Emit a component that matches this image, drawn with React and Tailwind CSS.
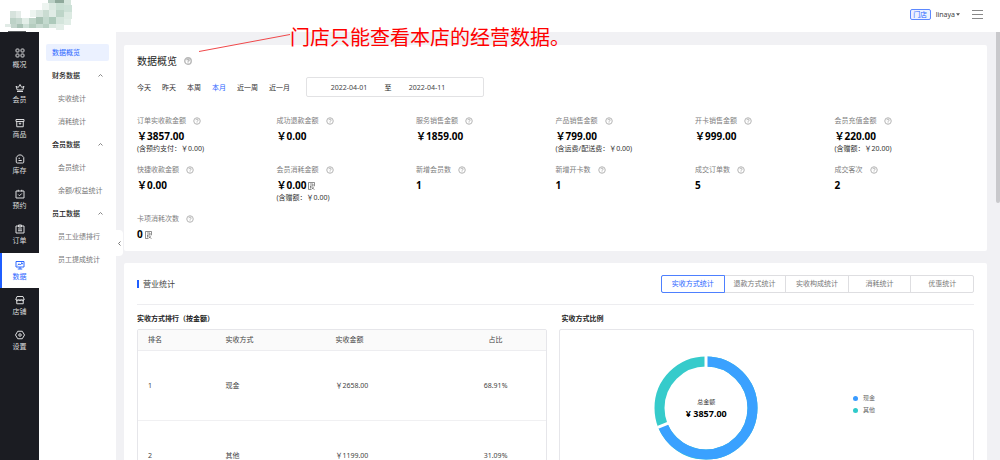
import React from "react";

const navItems = [
  { label: "概况", icon: "grid" },
  { label: "会员", icon: "crown" },
  { label: "商品", icon: "box" },
  { label: "库存", icon: "stock" },
  { label: "预约", icon: "booking" },
  { label: "订单", icon: "order" },
  { label: "数据", icon: "data", active: true },
  { label: "店铺", icon: "shop" },
  { label: "设置", icon: "settings" },
];

const iconShapes = {
  grid: (
    <>
      <rect x="2" y="2" width="6" height="6" rx="1.5" />
      <rect x="12" y="2" width="6" height="6" rx="1.5" />
      <rect x="2" y="12" width="6" height="6" rx="1.5" />
      <rect x="12" y="12" width="6" height="6" rx="1.5" />
    </>
  ),
  crown: (
    <path d="M4 17h12M4.500 14 2 6.500l4.500 2.500L10 3l3.500 6L18 6.500 15.500 14z" />
  ),
  box: (
    <path d="M2 3h16v4H2zM3.500 7v10.500h13V7M7.500 10.500h5M10 10.500v3" />
  ),
  stock: (
    <path d="M2.500 7 7 2h6l4.500 5v9a2 2 0 0 1-2 2h-11a2 2 0 0 1-2-2zM7 8.500h3M7 13h6.500" />
  ),
  booking: (
    <path d="M2 4h16v14H2zM6.500 1.500V5M13.500 1.500V5M6.500 11l2.500 2.500 4.500-4.500" />
  ),
  order: <path d="M2 4h16v14H2zM7 2h6v4H7zM6 10h8M6 13.500h8" />,
  data: (
    <path d="M2 3h16v11H2zM10 14v4M5.500 18h9M5.500 10.500 8 7.500l2.500 2.500L14.500 6M12 6h2.500v2.500" />
  ),
  shop: (
    <path d="M4 3h12l2 5v2H2V8zM3.500 10v7.500h13V10M2 9.500c1.500 2.500 4 2.500 5.300 0 1.300 2.500 4.100 2.500 5.400 0 1.300 2.500 3.800 2.500 5.300 0" />
  ),
  settings: (
    <>
      <path d="M5.500 2.500h9L19 10l-4.500 7.500h-9L1 10z" />
      <circle cx="10" cy="10" r="2.500" />
    </>
  ),
};

const menuGroups = [
  { title: "财务数据", items: ["实收统计", "消耗统计"] },
  { title: "会员数据", items: ["会员统计", "余额/权益统计"] },
  { title: "员工数据", items: ["员工业绩排行", "员工提成统计"] },
];

const ranges = ["今天", "昨天", "本周", "本月", "近一周", "近一月"];

const stats = [
  { label: "订单实收款金额", value: "￥3857.00", note: "(含预约支付：￥0.00)" },
  { label: "成功退款金额", value: "￥0.00" },
  { label: "服务销售金额", value: "￥1859.00" },
  { label: "产品销售金额", value: "￥799.00", note: "(含运费/配送费：￥0.00)" },
  { label: "开卡销售金额", value: "￥999.00" },
  { label: "会员充值金额", value: "￥220.00", note: "(含赠额：￥20.00)" },
  { label: "快捷收款金额", value: "￥0.00" },
  { label: "会员消耗金额", value: "￥0.00", note: "(含赠额：￥0.00)", detail: true },
  { label: "新增会员数", value: "1" },
  { label: "新增开卡数", value: "1" },
  { label: "成交订单数", value: "5" },
  { label: "成交客次", value: "2" },
  { label: "卡项消耗次数", value: "0", detail: true },
];

const statTabs = ["实收方式统计", "退款方式统计", "实收构成统计", "消耗统计", "优惠统计"];

const payments = [
  { rank: 1, name: "现金", amount: "￥2658.00", share: "68.91%" },
  { rank: 2, name: "其他", amount: "￥1199.00", share: "31.09%" },
];

const logoBlocks = [
  [48, 0, 7, 3, "#b9cfc4"], [55, 0, 9, 3, "#8fa99b"], [64, 0, 7, 5, "#d5e5dc"],
  [42, 3, 7, 7, "#edf4f0"], [49, 3, 7, 7, "#dbe9e1"], [56, 3, 8, 7, "#c9dfd3"], [64, 5, 8, 7, "#cde1d7"],
  [10, 11, 6, 7, "#d6e2dc"], [16, 11, 5, 7, "#e4ece8"], [30, 10, 6, 7, "#edf4f0"], [36, 10, 7, 7, "#dce8e2"],
  [43, 10, 6, 7, "#cadcd2"], [49, 10, 7, 7, "#e0ece6"], [56, 10, 8, 7, "#bdd5c8"], [64, 12, 8, 7, "#dceae2"],
  [10, 18, 6, 6, "#bdd2c7"], [16, 18, 6, 6, "#c6d8cf"], [22, 18, 7, 6, "#e3eee8"], [29, 18, 7, 6, "#bfd5c9"],
  [36, 17, 7, 7, "#a9c3b5"], [43, 17, 6, 7, "#c3d9ce"], [49, 17, 7, 7, "#adcabb"], [56, 17, 8, 7, "#d4e5dc"], [64, 19, 7, 6, "#e0ede6"],
  [5, 24, 6, 3, "#e1ebe6"], [11, 24, 6, 4, "#c2d4cb"], [17, 24, 6, 4, "#a9c2b5"], [23, 24, 6, 4, "#cddfd6"],
  [29, 24, 7, 4, "#b5cdc0"], [36, 24, 7, 4, "#c9dbd2"], [43, 24, 6, 4, "#b9d0c4"], [49, 24, 7, 4, "#dbe9e1"], [56, 24, 8, 6, "#e3eee8"],
  [8, 31, 18, 1, "#5b5e60"],
];

function Help({ large }) {
  return (
    <svg
      viewBox="0 0 16 16"
      aria-hidden="true"
      className={large ? "size-[8px] text-[#b8b8b8]" : "size-[8px] text-[#b4b4b4]"}
      fill="none"
      stroke="currentColor"
      strokeWidth={large ? 2.8 : 2}
    >
      <circle cx="8" cy="8" r="6.500" />
      <path d="M5.700 6.300c0-3 4.600-3 4.600 0 0 1.500-2.300 1.600-2.300 3.200M8 11v1.500" />
    </svg>
  );
}

function DetailIcon() {
  return (
    <svg viewBox="0 0 14 16" aria-hidden="true" className="h-[8px] w-[7px] text-[#555555]" fill="none" stroke="currentColor" strokeWidth="1.300">
      <path d="M1 15V1h12v7M1 15h5M4 4h6v4H4M5 8v5M7 11l6 4M12 9l-5 6" />
    </svg>
  );
}

function NavRail() {
  return (
    <nav className="w-[39px] shrink-0 bg-[#1b1c22] pt-[9px]">
      <div className="grid h-[318px] auto-rows-fr">
        {navItems.map((item) => (
          <a
            key={item.label}
            href="#"
            className={
              item.active
                ? "flex flex-col items-center justify-center gap-px border-l-2 border-[#1f5eff] bg-white pr-[2px] text-[#2a66ff]"
                : "flex flex-col items-center justify-center gap-px text-[#dcdcde]"
            }
          >
            <svg viewBox="0 0 20 20" aria-hidden="true" className="size-[10px]" fill="none" stroke="currentColor" strokeWidth="2" strokeLinejoin="round">
              {iconShapes[item.icon]}
            </svg>
            <span className="leading-[11px]">{item.label}</span>
          </a>
        ))}
      </div>
    </nav>
  );
}

function SideMenu() {
  return (
    <aside className="w-[77px] shrink-0 bg-white pt-[9px]">
      <div className="flex h-[23px] items-center px-[7px]">
        <a href="#" className="flex h-[17px] grow items-center rounded-xs bg-[#ebf1ff] pl-[6px] text-[#2a66ff]">
          数据概览
        </a>
      </div>
      {menuGroups.map((group) => (
        <section key={group.title}>
          <button type="button" className="flex h-[23px] w-full items-center justify-between px-[13px] font-medium text-[#222222]">
            {group.title}
            <svg viewBox="0 0 10 6" aria-hidden="true" className="h-[3px] w-[5px]" fill="none" stroke="#777777" strokeWidth="1.800">
              <path d="M1 5l4-4 4 4" />
            </svg>
          </button>
          {group.items.map((item) => (
            <a key={item} href="#" className="flex h-[23px] items-center pl-[19px] whitespace-nowrap text-[#777777]">
              {item}
            </a>
          ))}
        </section>
      ))}
    </aside>
  );
}

function Overview() {
  return (
    <section className="rounded-xs bg-white px-[13px] pt-[8px] pb-[10px]">
      <div className="flex items-center gap-[7px]">
        <h1 className="text-[10px] leading-[16px] text-[#222222]">数据概览</h1>
        <Help large />
      </div>
      <div className="mt-[8px] flex items-center">
        <div className="flex gap-[11px]">
          {ranges.map((range) => (
            <button key={range} type="button" className={range === "本月" ? "text-[#2a66ff]" : "text-[#333333]"}>
              {range}
            </button>
          ))}
        </div>
        <div className="ml-[16px] flex h-[20px] w-[178px] items-center rounded-xs border border-[#e2e2e4] pl-[13px]">
          <input aria-label="开始日期" defaultValue="2022-04-01" className="w-[58px] text-center text-[#444444] outline-none" />
          <span className="w-[20px] text-center font-medium text-[#333333]">至</span>
          <input aria-label="结束日期" defaultValue="2022-04-11" className="w-[58px] text-center text-[#444444] outline-none" />
        </div>
      </div>
      <dl className="mt-[18px] grid grid-cols-6 gap-y-[9px]">
        {stats.map((stat) => (
          <div key={stat.label} className="whitespace-nowrap">
            <dt className="flex items-center gap-[7px] text-[#808080]">
              {stat.label}
              <Help />
            </dt>
            <dd className="mt-[4px] flex items-center gap-[2px] text-[10px] leading-[13px] font-bold text-black">
              {stat.value}
              {stat.detail && <DetailIcon />}
            </dd>
            {stat.note && <dd className="leading-[12px] text-[#333333]">{stat.note}</dd>}
          </div>
        ))}
      </dl>
    </section>
  );
}

function Donut() {
  const length = 2 * Math.PI * 46.5;
  return (
    <div className="grid size-[104px] place-items-center">
      <svg viewBox="0 0 104 104" aria-hidden="true" className="col-start-1 row-start-1 size-full" fill="none">
        <circle cx="52" cy="52" r="46.500" stroke="#36cbcb" strokeWidth="10" />
        <circle
          cx="52"
          cy="52"
          r="46.500"
          stroke="#3aa1ff"
          strokeWidth="10"
          strokeDasharray={`${length * 0.6891} ${length}`}
          transform="rotate(-90 52 52)"
        />
        <path d="M52 14V0" stroke="#ffffff" strokeWidth="3" />
        <path d="M52 14V0" stroke="#ffffff" strokeWidth="3" transform="rotate(248.080 52 52)" />
      </svg>
      <p className="col-start-1 row-start-1 text-center text-[6px] leading-[12px] text-[#333333]">
        总金额
        <strong className="block text-[9px] leading-[12px] text-black">¥ 3857.00</strong>
      </p>
    </div>
  );
}

function Business() {
  return (
    <section className="mt-3 rounded-xs bg-white px-[13px] pb-3">
      <header className="flex h-[42px] items-center justify-between border-b border-[#ededf0]">
        <h2 className="flex items-center gap-[4px] text-[8px] text-[#444444]">
          <span className="h-[8px] w-[2px] bg-[#1f5eff]" />
          营业统计
        </h2>
        <div className="flex h-[18px] w-[313px] rounded-xs border border-[#dedee1]">
          {statTabs.map((tab, i) => (
            <button
              key={tab}
              type="button"
              className={
                i === 0
                  ? "-m-px flex-1 rounded-l-xs border border-[#4e80ff] text-[#2a66ff]"
                  : i === 1
                    ? "flex-1 text-[#777777]"
                    : "flex-1 border-l border-[#dedee1] text-[#777777]"
              }
            >
              {tab}
            </button>
          ))}
        </div>
      </header>
      <div className="grid grid-cols-[410fr_416fr] gap-3 pt-[8px]">
        <div>
          <h3 className="mb-[5px] font-bold text-[#222222]">实收方式排行（按金额）</h3>
          <div className="overflow-hidden rounded-xs border border-[#e6e6ea]">
            <table className="w-full table-fixed text-left text-[#444444]">
              <thead className="bg-[#fafafa]">
                <tr className="h-[20px] border-b border-[#ededf0]">
                  <th className="w-[19%] pl-[10px] font-normal">排名</th>
                  <th className="w-[27%] pl-[10px] font-normal">实收方式</th>
                  <th className="w-[30%] pl-[10px] font-normal">实收金额</th>
                  <th className="pr-[2px] text-center font-normal">占比</th>
                </tr>
              </thead>
              <tbody>
                {payments.map((row) => (
                  <tr key={row.rank} className="h-[70px] border-b border-[#f0f0f2]">
                    <td className="pl-[10px]">{row.rank}</td>
                    <td className="pl-[10px]">{row.name}</td>
                    <td className="pl-[10px]">{row.amount}</td>
                    <td className="pr-[2px] text-center">{row.share}</td>
                  </tr>
                ))}
              </tbody>
            </table>
          </div>
        </div>
        <div className="flex flex-col">
          <h3 className="mb-[5px] pl-[3px] font-bold text-[#222222]">实收方式比例</h3>
          <div className="flex grow rounded-xs border border-[#e6e6ea]">
            <div className="flex w-[71%] justify-center pt-[26px]">
              <Donut />
            </div>
            <ul className="pt-[62px] text-[6px] text-[#666666]">
              <li className="flex items-center gap-[5px] leading-[12px]">
                <span className="size-[5px] rounded-full bg-[#3a9bff]" />
                现金
              </li>
              <li className="flex items-center gap-[5px] leading-[12px]">
                <span className="size-[5px] rounded-full bg-[#2fcaca]" />
                其他
              </li>
            </ul>
          </div>
        </div>
      </div>
    </section>
  );
}

export default function App() {
  return (
    <div
      lang="zh-CN"
      className="relative flex h-screen flex-col overflow-hidden bg-[#f1f1f4] font-['Noto_Sans','Noto_Sans_CJK_SC',sans-serif] text-[7px] leading-[11px]"
    >
      <header className="flex h-[32px] shrink-0 items-center justify-between bg-white pr-[17px]">
        <svg viewBox="0 0 76 32" aria-hidden="true" className="h-[32px] w-[76px]">
          {logoBlocks.map(([x, y, w, h, fill]) => (
            <rect key={`${x}-${y}`} x={x} y={y} width={w} height={h} fill={fill} />
          ))}
        </svg>
        <div className="flex items-center pb-[4px]">
          <span className="flex h-[11px] w-[21px] items-center justify-center rounded-xs border border-[#5c88ff] bg-[#edf2ff] text-[#2a66ff]">
            门店
          </span>
          <button type="button" className="ml-[5px] flex items-center gap-[1px] text-[#444444]">
            linaya
            <svg viewBox="0 0 8 5" aria-hidden="true" className="h-[3px] w-[4px]">
              <path d="M0 0h8L4 5z" fill="#555555" />
            </svg>
          </button>
          <button type="button" aria-label="菜单" className="ml-[12px]">
            <svg viewBox="0 0 11 9" aria-hidden="true" className="h-[9px] w-[11px]" stroke="#888888" strokeWidth="1">
              <path d="M0 .5h11M0 4.500h11M0 8.500h11" />
            </svg>
          </button>
        </div>
      </header>
      <div className="flex min-h-0 grow">
        <NavRail />
        <SideMenu />
        <main className="relative min-w-0 grow overflow-hidden pt-[13px] pr-[9px] pl-[8px]">
          <Overview />
          <Business />
          <button
            type="button"
            aria-label="收起菜单"
            className="absolute top-[198px] left-0 flex h-[26px] w-[7px] items-center justify-center rounded-r-sm bg-white"
          >
            <svg viewBox="0 0 6 10" aria-hidden="true" className="h-[5px] w-[3px]" fill="none" stroke="#777777" strokeWidth="2">
              <path d="M5 1 1 5l4 4" />
            </svg>
          </button>
        </main>
        <div className="w-[4px] shrink-0">
          <div className="h-[171px] rounded-b-full bg-[#c9c9cc]" />
        </div>
      </div>
      <div className="pointer-events-none absolute top-[22px] left-[198px] flex items-start">
        <svg viewBox="0 0 92 32" aria-hidden="true" className="h-[32px] w-[92px]">
          <path d="M1 29.500 92 12.500" stroke="#f0484a" strokeWidth="1" />
        </svg>
        <p className="text-[20px] leading-[32px] whitespace-nowrap text-[#ff0000]">门店只能查看本店的经营数据。</p>
      </div>
    </div>
  );
}
